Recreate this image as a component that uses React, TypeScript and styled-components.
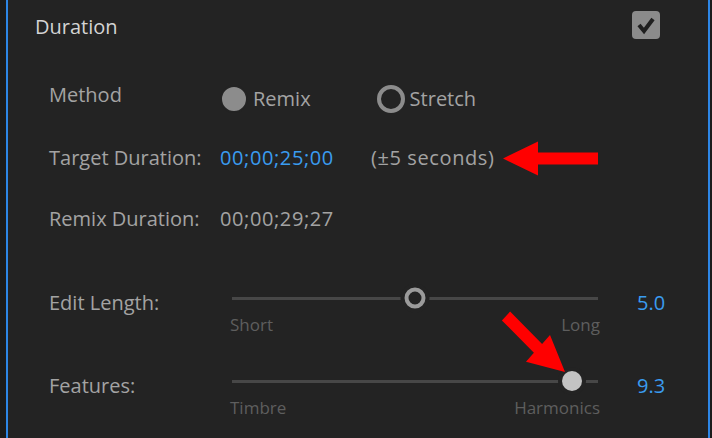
import React from "react";
import styled, { createGlobalStyle } from "styled-components";

const Global = createGlobalStyle`
  html, body { margin: 0; padding: 0; background: #1b1b1b; }
  body { font-family: "Open Sans", "Noto Sans", sans-serif; }
`;

const Page = styled.div`
  position: relative;
  display: flex;
  height: 438px;
  padding-left: 6px;
  box-sizing: border-box;
  background: #1b1b1b;
  overflow: hidden;
`;

const Panel = styled.section`
  width: 704px;
  box-sizing: border-box;
  border-left: 2px solid #2d86e6;
  border-right: 2px solid #2d86e6;
  background: #232323;
  display: flex;
  flex-direction: column;
  font-size: 20px;
  line-height: 24px;
  color: #a3a3a3;
`;

const Header = styled.header`
  display: flex;
  justify-content: space-between;
  align-items: flex-start;
  padding: 11px 48px 0 27px;
`;

const Title = styled.h2`
  margin: 4px 0 0;
  font-size: 20px;
  font-weight: 400;
  line-height: 24px;
  color: #d4d4d4;
`;

const CheckBox = styled.span`
  width: 28px;
  height: 28px;
  border-radius: 4px;
  background: #8b8b8b;
  display: flex;
  align-items: center;
  justify-content: center;
`;

const Body = styled.div`
  display: flex;
  flex-direction: column;
  padding-left: 41px;
`;

const InfoRow = styled.div<{ $top: number }>`
  display: flex;
  align-items: flex-start;
  margin-top: ${(p) => p.$top}px;
  white-space: nowrap;
`;

const CenterRow = styled(InfoRow)`
  align-items: center;
  height: 24px;
`;

const Label = styled.span`
  flex: none;
  width: 171px;
`;

const Value = styled.span<{ $blue?: boolean; $width?: number }>`
  flex: none;
  letter-spacing: 0.6px;
  color: ${(p) => (p.$blue ? "#3a9cf0" : "#a3a3a3")};
  width: ${(p) => (p.$width ? `${p.$width}px` : "auto")};
`;

const RadioGroup = styled.div`
  display: flex;
  gap: 66px;
  margin-top: 2px;
`;

const RadioOption = styled.label`
  display: flex;
  align-items: center;
  gap: 5px;
  height: 28px;
`;

const Radio = styled.span<{ $checked?: boolean }>`
  width: 28px;
  height: 28px;
  border-radius: 50%;
  box-sizing: border-box;
  flex: none;
  background: ${(p) => (p.$checked ? "#8c8c8c" : "transparent")};
  border: ${(p) => (p.$checked ? "2px solid #232323" : "4px solid #8c8c8c")};
`;

const SliderRow = styled.div<{ $top: number }>`
  display: grid;
  grid-template-columns: 181px 370px 1fr;
  margin-top: ${(p) => p.$top}px;
  white-space: nowrap;
`;

const SliderLabel = styled.span`
  padding-top: 3px;
`;

const SliderValue = styled.span`
  padding: 3px 0 0 37px;
  color: #3a9cf0;
`;

const SliderCol = styled.div`
  display: flex;
  flex-direction: column;
`;

const TrackArea = styled.div`
  height: 20px;
  display: flex;
  align-items: center;
`;

const Track = styled.div`
  position: relative;
  flex: 1;
  height: 3px;
  margin: 0 2px;
  background: #474747;
`;

const Thumb = styled.span<{ $filled?: boolean }>`
  position: absolute;
  top: 50%;
  transform: translate(-50%, -50%);
  border-radius: 50%;
  box-sizing: border-box;
  box-shadow: 0 0 0 4px #232323;
  width: ${(p) => (p.$filled ? 20 : 21)}px;
  height: ${(p) => (p.$filled ? 20 : 21)}px;
  background: ${(p) => (p.$filled ? "#c3c3c3" : "#232323")};
  border: ${(p) => (p.$filled ? "none" : "4px solid #9b9b9b")};
`;

const RangeLabels = styled.div`
  display: flex;
  justify-content: space-between;
  margin-top: 7px;
  font-size: 17px;
  line-height: 20px;
  color: #5e5e5e;
`;

const ArrowLeft = styled.svg`
  flex: none;
  display: block;
`;

const Overlay = styled.svg`
  position: absolute;
  left: 495px;
  top: 305px;
  pointer-events: none;
`;

type SliderProps = {
  label: string;
  value: number;
  min: string;
  max: string;
  filled?: boolean;
  top: number;
};

function Slider({ label, value, min, max, filled, top }: SliderProps) {
  return (
    <SliderRow $top={top}>
      <SliderLabel>{label}</SliderLabel>
      <SliderCol>
        <TrackArea>
          <Track>
            <Thumb $filled={filled} style={{ left: `${(value / 10) * 100}%` }} />
          </Track>
        </TrackArea>
        <RangeLabels>
          <span>{min}</span>
          <span>{max}</span>
        </RangeLabels>
      </SliderCol>
      <SliderValue>{value.toFixed(1)}</SliderValue>
    </SliderRow>
  );
}

export default function App() {
  return (
    <Page>
      <Global />
      <Panel>
        <Header>
          <Title>Duration</Title>
          <CheckBox>
            <svg width="28" height="28" viewBox="0 0 28 28">
              <path d="M7 14 L12 20 L21 8" fill="none" stroke="#1f1f1f" strokeWidth="4" />
            </svg>
          </CheckBox>
        </Header>
        <Body>
          <InfoRow $top={44}>
            <Label>Method</Label>
            <RadioGroup>
              <RadioOption>
                <Radio $checked />
                <span>Remix</span>
              </RadioOption>
              <RadioOption>
                <Radio />
                <span>Stretch</span>
              </RadioOption>
            </RadioGroup>
          </InfoRow>
          <CenterRow $top={33}>
            <Label>Target Duration:</Label>
            <Value $blue $width={151}>00;00;25;00</Value>
            <Value $width={132}>(±5 seconds)</Value>
            <ArrowLeft width="96" height="35" viewBox="0 0 96 35">
              <polygon
                points="0,17.5 35,0.5 35,11.5 95,11.5 95,23.5 35,23.5 35,34.5"
                fill="#ff0000"
              />
            </ArrowLeft>
          </CenterRow>
          <CenterRow $top={37}>
            <Label>Remix Duration:</Label>
            <Value>00;00;29;27</Value>
          </CenterRow>
          <Slider label="Edit Length:" value={5.0} min="Short" max="Long" top={57} />
          <Slider label="Features:" value={9.3} min="Timbre" max="Harmonics" filled top={36} />
        </Body>
      </Panel>
      <Overlay width="75" height="72" viewBox="495 305 75 72">
        <polygon
          points="501.9,320.4 510.1,311.6 542.1,343.9 550,335 565,372 526,361.7 533.9,352.7"
          fill="#ff0000"
        />
      </Overlay>
    </Page>
  );
}
